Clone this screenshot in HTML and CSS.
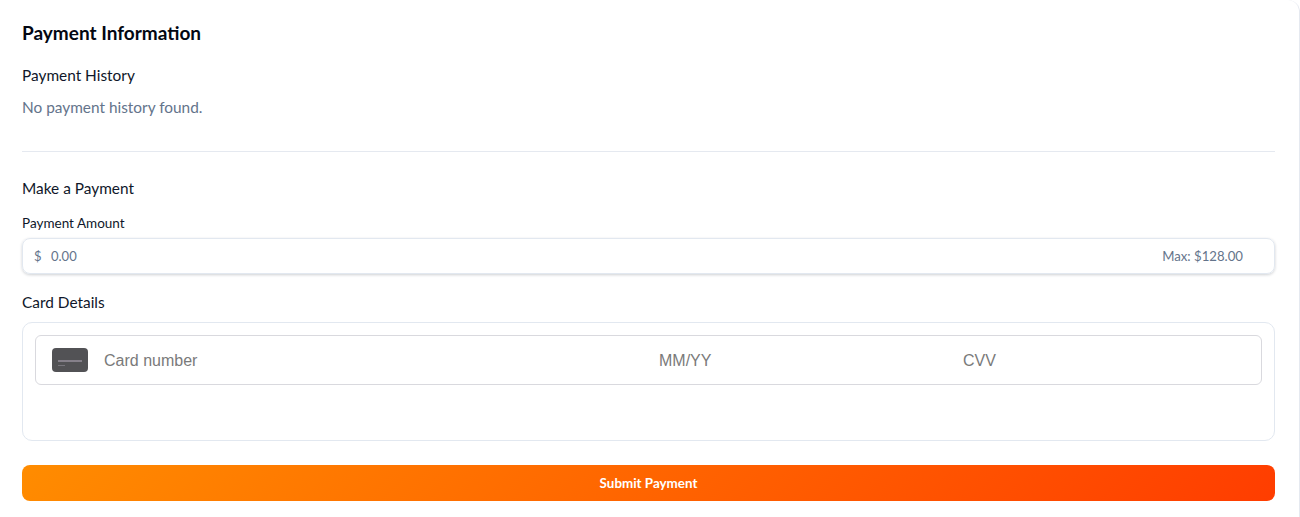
FILE: index.html
```html
<!DOCTYPE html>
<html lang="en">
<head>
    <meta charset="UTF-8">
    <meta name="viewport" content="width=device-width, initial-scale=1.0">
    <title>Payment Information</title>
    <link rel="stylesheet" href="styles.css">
</head>
<body>
<div class="panel">
    <h2 class="panel-title">Payment Information</h2>

    <section class="history">
        <h3 class="section-title">Payment History</h3>
        <p class="empty-text">No payment history found.</p>
    </section>

    <h3 class="section-title">Make a Payment</h3>
    <div class="field-label">Payment Amount</div>
    <div class="amount-box">
        <span class="currency">$</span>
        <span class="amount-value">0.00</span>
        <span class="amount-max">Max: $128.00</span>
    </div>

    <h3 class="section-title card-title">Card Details</h3>
    <div class="card-box">
        <div class="card-input">
            <svg class="card-icon" width="36" height="24" viewBox="0 0 36 24">
                <rect width="36" height="24" rx="4" fill="#525255"/>
                <rect x="6" y="12" width="24" height="2" fill="#85808a"/>
                <rect x="6" y="17" width="7" height="1" fill="#77757c"/>
            </svg>
            <span class="card-number">Card number</span>
            <span class="card-expiry">MM/YY</span>
            <span class="card-cvv">CVV</span>
        </div>
    </div>

    <div class="submit-button">Submit Payment</div>
</div>
</body>
</html>
```

FILE: styles.css
```css
html {
    overflow: hidden;
}
body {
    margin: 0;
    background-color: #fff;
    font-family: Lato, sans-serif;
    color: #0f172a;
}
.panel {
    padding: 21px 24px 24px 22px;
    border-right: 1px solid #e5e9f0;
    border-top-right-radius: 12px;
    width: 1300px;
    box-sizing: border-box;
}
.panel-title {
    margin: 0 0 18px;
    font-size: 19px;
    line-height: 24px;
    font-weight: 700;
    color: #030712;
}
.section-title {
    margin: 0;
    font-size: 15.4px;
    line-height: 24px;
    font-weight: 400;
}
.history {
    padding-bottom: 32px;
    margin-bottom: 24px;
    border-bottom: 1px solid #e5e9f0;
}
.empty-text {
    margin: 8px 0 0;
    font-size: 15.4px;
    line-height: 24px;
    color: #64748b;
}
.field-label {
    margin-top: 15px;
    font-size: 13.5px;
    line-height: 16px;
}
.amount-box {
    display: flex;
    align-items: center;
    box-sizing: border-box;
    height: 36px;
    margin-top: 7px;
    padding: 0 31px 0 11px;
    border: 1px solid #e2e8f0;
    border-radius: 8px;
    box-shadow: 0 1px 3px rgba(15, 23, 42, 0.2);
    font-size: 13px;
}
.currency {
    color: #64748b;
    width: 17px;
}
.amount-value {
    flex: 1;
    color: #64748b;
}
.amount-max {
    color: #64748b;
    font-size: 13.2px;
}
.card-title {
    margin-top: 16px;
}
.card-box {
    height: 119px;
    margin-top: 8px;
    padding: 12px;
    box-sizing: border-box;
    border: 1px solid #e2e8f0;
    border-radius: 10px;
}
.card-input {
    display: flex;
    align-items: center;
    height: 50px;
    box-sizing: border-box;
    padding-left: 16px;
    border: 1px solid #d9d9de;
    border-radius: 6px;
    font-family: "Liberation Sans", sans-serif;
    font-size: 16px;
    color: #7a7a7a;
}
.card-number,
.card-expiry,
.card-cvv {
    padding-top: 2px;
}
.card-number {
    margin-left: 16px;
    width: 555px;
}
.card-expiry {
    width: 304px;
}
.submit-button {
    height: 36px;
    margin-top: 24px;
    border-radius: 8px;
    background: linear-gradient(135deg, #ff8c00, #ff3d00);
    color: #fff;
    font-size: 13.4px;
    font-weight: 700;
    line-height: 36px;
    text-align: center;
}
```
